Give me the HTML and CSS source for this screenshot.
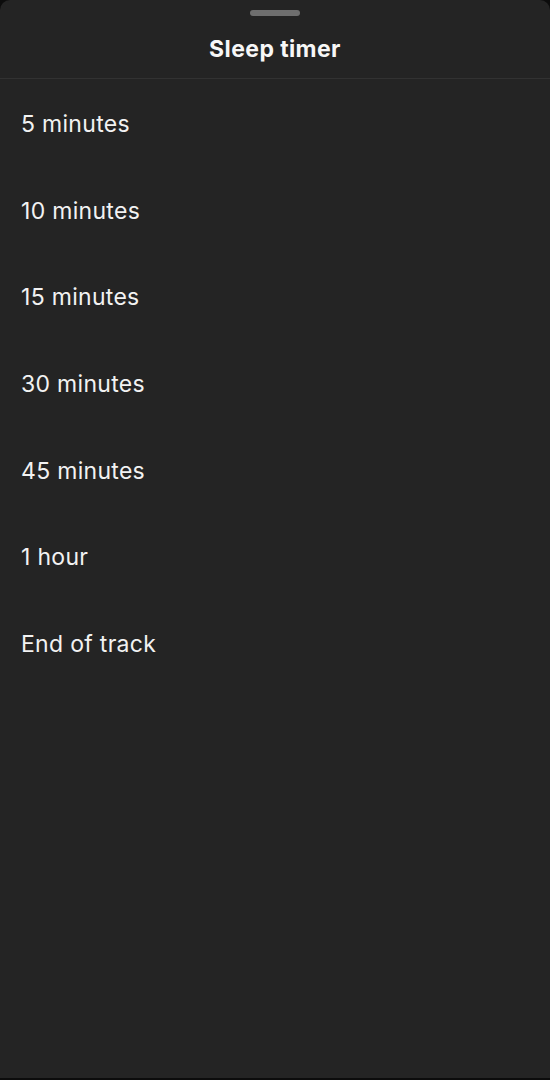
FILE: index.html
```html
<!DOCTYPE html>
<html>
<head>
<meta charset="utf-8">
<link rel="stylesheet" href="styles.css">
</head>
<body>
<div class="sheet">
  <div class="header">
    <div class="handle"></div>
    <h1 class="title">Sleep timer</h1>
  </div>
  <ul class="options">
    <li class="option">5 minutes</li>
    <li class="option">10 minutes</li>
    <li class="option">15 minutes</li>
    <li class="option">30 minutes</li>
    <li class="option">45 minutes</li>
    <li class="option">1 hour</li>
    <li class="option">End of track</li>
  </ul>
</div>
</body>
</html>
```
FILE: styles.css
```css
html, body {
  margin: 0;
  padding: 0;
  background: #0c0c0c;
  height: 100%;
}
.sheet {
  box-sizing: border-box;
  height: 1078px;
  background: #242424;
  border-radius: 10px 10px 0 0;
  font-family: Inter, "Noto Sans", sans-serif;
  color: #f2f2f2;
  overflow: hidden;
}
.header {
  display: flex;
  flex-direction: column;
  align-items: center;
  height: 78px;
  border-bottom: 1px solid #323232;
}
.handle {
  width: 50px;
  height: 6px;
  border-radius: 3px;
  background: #6e6e6e;
  margin-top: 10px;
}
.title {
  margin: 20px 0 0;
  font-size: 23px;
  font-weight: 700;
  line-height: 26px;
  letter-spacing: 0.4px;
  color: #f7f7f7;
}
.options {
  list-style: none;
  margin: 0;
  padding: 0 21px;
}
.option {
  height: 86.7px;
  box-sizing: border-box;
  padding-top: 32px;
  font-size: 23px;
  line-height: 26px;
  letter-spacing: 0.3px;
}
```
